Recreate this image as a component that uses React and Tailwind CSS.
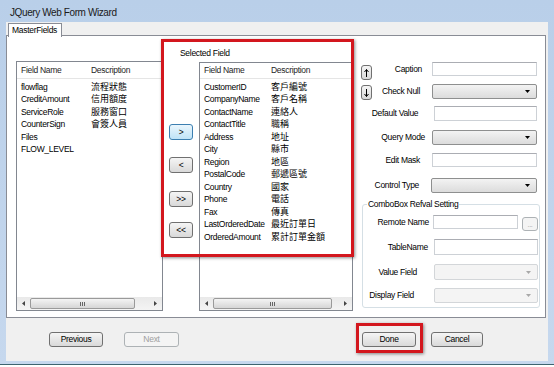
import React from "react";

const leftFields = [
  ["flowflag", "流程狀態"],
  ["CreditAmount", "信用額度"],
  ["ServiceRole", "服務窗口"],
  ["CounterSign", "會簽人員"],
  ["Files", ""],
  ["FLOW_LEVEL", ""],
];

const selectedFields = [
  ["CustomerID", "客戶編號"],
  ["CompanyName", "客戶名稱"],
  ["ContactName", "連絡人"],
  ["ContactTitle", "職稱"],
  ["Address", "地址"],
  ["City", "縣市"],
  ["Region", "地區"],
  ["PostalCode", "郵遞區號"],
  ["Country", "國家"],
  ["Phone", "電話"],
  ["Fax", "傳真"],
  ["LastOrderedDate", "最近訂單日"],
  ["OrderedAmount", "累計訂單金額"],
];

function Btn({ children, className = "", focus, disabled }) {
  const tone = disabled
    ? "border-[#adb2b5] bg-[#f4f4f4] text-[#a0a0a0]"
    : focus
    ? "border-[#3c7fb1] bg-gradient-to-b from-[#eaf6fd] to-[#bfe3f7] text-black"
    : "border-[#707070] bg-gradient-to-b from-[#f5f5f5] to-[#d9d9d9] text-black";
  return (
    <button
      type="button"
      className={`flex items-center justify-center rounded-[3px] border leading-none ${tone} ${className}`}
    >
      {children}
    </button>
  );
}

function TextBox({ className = "" }) {
  return <div className={`bg-white border border-[#cdd1d6] border-t-[#abadb3] ${className}`} />;
}

function Combo({ className = "", disabled }) {
  return (
    <div
      className={`flex items-center justify-end pr-[6px] rounded-[2px] border ${
        disabled
          ? "border-[#d3d6d9] bg-[#f4f4f4]"
          : "border-[#8e8f8f] bg-gradient-to-b from-[#f3f3f3] to-[#dcdcdc]"
      } ${className}`}
    >
      <svg width="5" height="3" viewBox="0 0 5 3">
        <path d="M0 0h5L2.5 3z" fill={disabled ? "#a8a8a8" : "#000"} />
      </svg>
    </div>
  );
}

function HScroll({ thumb }) {
  return (
    <div className="flex h-[13px] items-center bg-gradient-to-b from-[#e9e9e9] to-[#f4f4f4]">
      <div className="flex w-[13px] justify-center">
        <svg width="3" height="5" viewBox="0 0 3 5">
          <path d="M3 0v5L0 2.5z" fill="#444" />
        </svg>
      </div>
      <div
        className={`flex h-[11px] items-center justify-center rounded-[2px] border border-[#9a9a9a] bg-gradient-to-b from-[#f4f4f4] to-[#d6d6d6] ${thumb}`}
      >
        <svg width="6" height="4" viewBox="0 0 6 4">
          <path d="M0.5 0v4M2.5 0v4M4.5 0v4" stroke="#666" strokeWidth="1" />
        </svg>
      </div>
      <div className="flex-1" />
      <div className="flex w-[13px] justify-center">
        <svg width="3" height="5" viewBox="0 0 3 5">
          <path d="M0 0v5L3 2.5z" fill="#444" />
        </svg>
      </div>
    </div>
  );
}

function ListView({ rows, className, col1, head, thumb }) {
  return (
    <div className={`flex flex-col border border-[#828790] bg-white ${className}`}>
      <div className={`flex items-center border-b border-[#e5e5e5] text-[#1e1e1e] ${head}`}>
        <div className={`${col1} pl-[4px]`}>Field Name</div>
        <div className="flex-1 pl-[4px]">Description</div>
      </div>
      <div className="flex-1 pt-[2px]">
        {rows.map(([f, d]) => (
          <div key={f} className="flex h-[12.5px] items-center whitespace-nowrap">
            <div className={`${col1} pl-[4px]`}>{f}</div>
            <div className="flex-1 pl-[4px] text-[9px] tracking-normal">{d}</div>
          </div>
        ))}
      </div>
      <HScroll thumb={thumb} />
    </div>
  );
}

function Arrow({ up }) {
  return (
    <Btn className={`h-[15px] w-[11px] ${up ? "mt-[3px]" : "mt-[1px]"}`}>
      <svg width="5" height="8" viewBox="0 0 5 8">
        <path
          d={up ? "M2.5 0.5V8M0.5 3L2.5 0.5L4.5 3" : "M2.5 0V7.5M0.5 5L2.5 7.5L4.5 5"}
          stroke="#000"
          strokeWidth="1"
          fill="none"
        />
      </svg>
    </Btn>
  );
}

function Row({ label, pr, mt, h, arrow, children }) {
  return (
    <div className={`flex items-center ${mt} ${h}`}>
      <div className="h-full w-[11px] self-start">{arrow}</div>
      <div className={`flex flex-1 justify-end whitespace-nowrap ${pr}`}>{label}</div>
      {children}
    </div>
  );
}

function GroupRow({ label, pr, mt, h, children }) {
  return (
    <div className={`flex items-center pr-[1px] ${mt} ${h}`}>
      <div className={`flex flex-1 justify-end whitespace-nowrap ${pr}`}>{label}</div>
      {children}
    </div>
  );
}

export default function App() {
  return (
    <div className="relative h-[367px] w-[554px] overflow-hidden bg-white font-['Liberation_Sans','Noto_Sans_CJK_TC',sans-serif] text-[8.5px] tracking-[-0.3px] text-black">
      <div className="flex h-[365px] flex-col border-b border-[#3d6470] bg-gradient-to-b from-[#b9cfe9] to-[#c6d8ee]">
        {/* title bar */}
        <div className="flex h-[22px] items-center pl-[10px] pt-[3px] text-[10px] tracking-[-0.4px] text-[#1a1a1a]">
          JQuery Web Form Wizard
        </div>

        {/* client */}
        <div className="mx-[6px] flex h-[339px] flex-col bg-[#f0f0f0]">
          {/* tab strip */}
          <div className="relative z-10 flex h-[13px] pl-[2px] pt-[1px]">
            <div className="flex h-[14px] w-[54px] items-center border border-b-0 border-[#898c95] bg-white pl-[3px]">
              MasterFields
            </div>
          </div>

          {/* tab page */}
          <div className="relative mr-[2px] flex h-[283px] items-start border border-[#898c95] bg-white pl-[9px]">
            <ListView
              rows={leftFields}
              className="mt-[25px] h-[250px] w-[147px]"
              col1="w-[70px]"
              head="h-[17px]"
              thumb="w-[105px]"
            />

            <div className="ml-[6px] mt-[12px] flex flex-col">
              <div className="h-[10px] pl-[11px] leading-[10px]">Selected Field</div>
              <div className="mt-[4px] flex">
                <div className="flex w-[24px] flex-col">
                  <Btn focus className="mt-[62px] h-[16px] w-[24px]">&gt;</Btn>
                  <Btn className="mt-[17px] h-[16px] w-[24px]">&lt;</Btn>
                  <Btn className="mt-[18px] h-[16px] w-[24px]">&gt;&gt;</Btn>
                  <Btn className="mt-[15px] h-[16px] w-[24px]">&lt;&lt;</Btn>
                </div>
                <ListView
                  rows={selectedFields}
                  className="ml-[6px] h-[249px] w-[154px]"
                  col1="w-[67px]"
                  head="h-[16px]"
                  thumb="w-[119px]"
                />
              </div>
            </div>

            {/* property panel */}
            <div className="ml-[8px] mt-[26px] flex w-[176px] flex-col">
              <Row label="Caption" pr="pr-[10px]" mt="" h="h-[14px]" arrow={<Arrow up />}>
                <TextBox className="h-[14px] w-[105px]" />
              </Row>
              <Row label="Check Null" pr="pr-[12px]" mt="mt-[8px]" h="h-[15px]" arrow={<Arrow />}>
                <Combo className="h-[15px] w-[105px]" />
              </Row>
              <Row label="Default Value" pr="pr-[16px]" mt="mt-[7px]" h="h-[15px]">
                <TextBox className="h-[15px] w-[105px]" />
              </Row>
              <Row label="Query Mode" pr="pr-[7px]" mt="mt-[9px]" h="h-[15px]">
                <Combo className="h-[15px] w-[105px]" />
              </Row>
              <Row label="Edit Mask" pr="pr-[12px]" mt="mt-[8px]" h="h-[14px]">
                <TextBox className="h-[14px] w-[105px]" />
              </Row>
              <Row label="Control Type" pr="pr-[12px]" mt="mt-[11px]" h="h-[15px]">
                <Combo className="h-[15px] w-[106px]" />
              </Row>

              <div className="relative ml-[1px] mt-[11px] flex w-[178px] flex-col rounded-[3px] border border-[#d5dfe5] pb-[4px]">
                <div className="absolute left-[4px] top-[-6px] bg-white px-[1px] leading-[10px]">
                  ComboBox Refval Setting
                </div>
                <GroupRow label="Remote Name" pr="pr-[4px]" mt="mt-[10px]" h="h-[14px]">
                  <TextBox className="h-[14px] w-[85px]" />
                  <Btn disabled className="ml-[4px] mt-[2px] h-[14px] w-[16px] self-start text-[7px]">
                    ...
                  </Btn>
                </GroupRow>
                <GroupRow label="TableName" pr="pr-[6px]" mt="mt-[10px]" h="h-[16px]">
                  <TextBox className="h-[16px] w-[104px]" />
                </GroupRow>
                <GroupRow label="Value Field" pr="pr-[17px]" mt="mt-[9px]" h="h-[16px]">
                  <Combo disabled className="h-[16px] w-[104px]" />
                </GroupRow>
                <GroupRow label="Display Field" pr="pr-[20px]" mt="mt-[8px]" h="h-[15px]">
                  <Combo disabled className="h-[15px] w-[104px]" />
                </GroupRow>
              </div>
            </div>

            {/* highlight around the selected-field area */}
            <div className="pointer-events-none absolute left-[154px] top-[3px] h-[218px] w-[193px] border-[3px] border-[#d3171e] shadow-[1px_1px_3px_rgba(0,0,0,0.45)]" />
          </div>

          {/* bottom buttons */}
          <div className="flex h-[43px] items-start pl-[43px] pt-[14px]">
            <Btn className="h-[15px] w-[54px]">Previous</Btn>
            <Btn disabled className="ml-[21px] h-[15px] w-[55px]">Next</Btn>
            <div className="relative ml-[183px]">
              <Btn className="h-[15px] w-[54px]">Done</Btn>
              <div className="pointer-events-none absolute bottom-[-6px] left-[-6px] right-[-7px] top-[-9px] border-[3px] border-[#d3171e] shadow-[1px_1px_3px_rgba(0,0,0,0.45)]" />
            </div>
            <Btn className="ml-[15px] h-[15px] w-[52px]">Cancel</Btn>
          </div>
        </div>
      </div>
    </div>
  );
}
